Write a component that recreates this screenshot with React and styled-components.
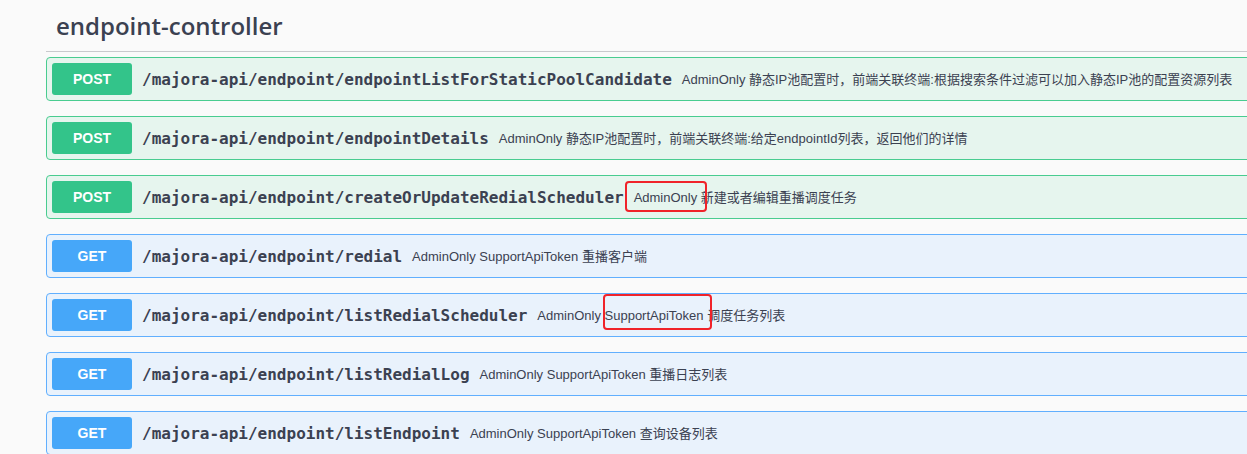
import styled, { createGlobalStyle, css } from "styled-components";

const GlobalStyle = createGlobalStyle`
    html, body{
        margin: 0;
        padding: 0;
        background-color: #fafafa;
        overflow: hidden;
    }
`;

const colors = {
    POST: { badge: "#33c48a", border: "#49cc90", bg: "#e6f5ee" },
    GET: { badge: "#46a7f9", border: "#61affe", bg: "#e9f2fc" },
};

const endpoints = [
    {
        method: "POST",
        path: "/majora-api/endpoint/endpointListForStaticPoolCandidate",
        desc: [{ text: "AdminOnly 静态IP池配置时，前端关联终端:根据搜索条件过滤可以加入静态IP池的配置资源列表" }],
    },
    {
        method: "POST",
        path: "/majora-api/endpoint/endpointDetails",
        desc: [{ text: "AdminOnly 静态IP池配置时，前端关联终端:给定endpointId列表，返回他们的详情" }],
    },
    {
        method: "POST",
        path: "/majora-api/endpoint/createOrUpdateRedialScheduler",
        desc: [
            { text: "AdminOnly", mark: { t: -9, r: -10, b: -7, l: -9 } },
            { text: " 新建或者编辑重播调度任务" },
        ],
    },
    {
        method: "GET",
        path: "/majora-api/endpoint/redial",
        desc: [{ text: "AdminOnly SupportApiToken 重播客户端" }],
    },
    {
        method: "GET",
        path: "/majora-api/endpoint/listRedialScheduler",
        desc: [
            { text: "AdminOnly " },
            { text: "SupportApiToken", mark: { t: -14, r: -8, b: -7, l: -2 } },
            { text: " 调度任务列表" },
        ],
    },
    {
        method: "GET",
        path: "/majora-api/endpoint/listRedialLog",
        desc: [{ text: "AdminOnly SupportApiToken 重播日志列表" }],
    },
    {
        method: "GET",
        path: "/majora-api/endpoint/listEndpoint",
        desc: [{ text: "AdminOnly SupportApiToken 查询设备列表" }],
    },
];

export default function App(){
    return(
        <Page>
            <GlobalStyle />
            <Section>
                <TagTitle>endpoint-controller</TagTitle>
                <List>
                    {endpoints.map((e) => (
                        <Block key={e.path} method={e.method}>
                            <Method method={e.method}>{e.method}</Method>
                            <Path>{e.path}</Path>
                            <Description>
                                {e.desc.map((d, i) => d.mark ?
                                    <Marked key={i} box={d.mark}>{d.text}</Marked>
                                    : <span key={i}>{d.text}</span>
                                )}
                            </Description>
                        </Block>
                    ))}
                </List>
            </Section>
        </Page>
    );
}

const Page = styled.main`
    width: 100%;
    min-height: 454px;
    background-color: #fafafa;
    overflow: hidden;
`

const Section = styled.section`
    margin-left: 46px;
    width: 1230px;
`

const TagTitle = styled.h3`
    margin: 0;
    padding: 11px 20px 10px 10px;
    line-height: 30px;
    font-family: "Open Sans", "Liberation Sans", sans-serif;
    font-size: 24px;
    font-weight: 600;
    color: #3b4151;
    border-bottom: 1px solid #c9cacd;
`

const List = styled.div`
    display: flex;
    flex-direction: column;
    gap: 15px;
    padding-top: 5px;
`

const Block = styled.div`
    display: flex;
    align-items: center;
    padding: 5px;
    border-radius: 4px;
    border: 1px solid ${(p) => colors[p.method].border};
    background-color: ${(p) => colors[p.method].bg};
`

const Method = styled.span`
    display: flex;
    align-items: center;
    justify-content: center;
    width: 80px;
    height: 32px;
    flex-shrink: 0;
    border-radius: 3px;
    background-color: ${(p) => colors[p.method].badge};
    color: white;
    font-family: "Liberation Sans", Arial, sans-serif;
    font-size: 14px;
    font-weight: bold;
`

const Path = styled.span`
    padding: 0 10px;
    font-family: "DejaVu Sans Mono", "Liberation Mono", monospace;
    font-size: 16px;
    font-weight: bold;
    color: #3b4151;
    white-space: nowrap;
`

const Description = styled.div`
    font-family: "Liberation Sans", Arial, "Noto Sans CJK SC", sans-serif;
    font-size: 13px;
    line-height: 15px;
    color: #3b4151;
    white-space: pre;
`

const Marked = styled.span`
    position: relative;
    display: inline-block;

    ${(p) => css`
        &::after{
            content: "";
            position: absolute;
            top: ${p.box.t}px;
            right: ${p.box.r}px;
            bottom: ${p.box.b}px;
            left: ${p.box.l}px;
            border: 2px solid #f0232a;
            border-radius: 4px;
        }
    `}
`
